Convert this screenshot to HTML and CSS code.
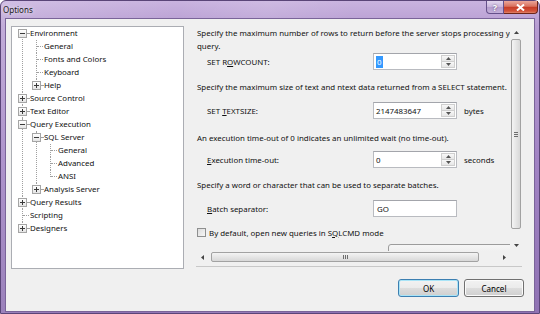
FILE: index.html
```html
<!DOCTYPE html>
<html lang="en">
<head>
    <meta charset="UTF-8">
    <title>Options</title>
    <link rel="stylesheet" href="styles.css">
</head>
<body>
    <div class="window">
        <div class="titlebar">
            <span class="title">Options</span>
            <div class="caption-buttons">
                <span class="cap-btn help">?</span>
                <span class="cap-btn close">
                    <svg width="9" height="7" viewBox="0 0 9 7"><path d="M1 0.5 L8 6.5 M8 0.5 L1 6.5" stroke="#fff" stroke-width="2"/></svg>
                </span>
            </div>
        </div>

        <div class="client">
            <div class="main">
                <div class="tree">
                    <ul class="tree-root">
                        <li>
                            <div class="node"><span class="toggle minus"></span><span class="dash"></span><span>Environment</span></div>
                            <ul>
                                <li><div class="node"><span class="leaf"></span><span>General</span></div></li>
                                <li><div class="node"><span class="leaf"></span><span>Fonts and Colors</span></div></li>
                                <li><div class="node"><span class="leaf"></span><span>Keyboard</span></div></li>
                                <li><div class="node"><span class="toggle plus"></span><span class="dash"></span><span>Help</span></div></li>
                            </ul>
                        </li>
                        <li><div class="node"><span class="toggle plus"></span><span class="dash"></span><span>Source Control</span></div></li>
                        <li><div class="node"><span class="toggle plus"></span><span class="dash"></span><span>Text Editor</span></div></li>
                        <li>
                            <div class="node"><span class="toggle minus"></span><span class="dash"></span><span>Query Execution</span></div>
                            <ul>
                                <li>
                                    <div class="node"><span class="toggle minus"></span><span class="dash"></span><span>SQL Server</span></div>
                                    <ul>
                                        <li><div class="node"><span class="leaf"></span><span>General</span></div></li>
                                        <li><div class="node"><span class="leaf"></span><span>Advanced</span></div></li>
                                        <li><div class="node"><span class="leaf"></span><span>ANSI</span></div></li>
                                    </ul>
                                </li>
                                <li><div class="node"><span class="toggle plus"></span><span class="dash"></span><span>Analysis Server</span></div></li>
                            </ul>
                        </li>
                        <li><div class="node"><span class="toggle plus"></span><span class="dash"></span><span>Query Results</span></div></li>
                        <li><div class="node"><span class="leaf"></span><span>Scripting</span></div></li>
                        <li><div class="node"><span class="toggle plus"></span><span class="dash"></span><span>Designers</span></div></li>
                    </ul>
                </div>

                <div class="page">
                    <div class="viewport">
                        <div class="content">
                            <p class="desc first">Specify the maximum number of rows to return before the server stops processing your<br>query.</p>
                            <div class="field">
                                <label>SET R<u>O</u>WCOUNT:</label>
                                <div class="textbox"><span class="sel">0</span>
                                    <div class="spin">
                                        <span class="spin-btn"><svg width="5" height="3" viewBox="0 0 5 3"><path d="M0 3 L2.5 0 L5 3Z" fill="#555"/></svg></span>
                                        <span class="spin-btn"><svg width="5" height="3" viewBox="0 0 5 3"><path d="M0 0 L2.5 3 L5 0Z" fill="#555"/></svg></span>
                                    </div>
                                </div>
                            </div>

                            <p class="desc">Specify the maximum size of text and ntext data returned from a SELECT statement.</p>
                            <div class="field">
                                <label>SET <u>T</u>EXTSIZE:</label>
                                <div class="textbox"><span>2147483647</span>
                                    <div class="spin">
                                        <span class="spin-btn"><svg width="5" height="3" viewBox="0 0 5 3"><path d="M0 3 L2.5 0 L5 3Z" fill="#555"/></svg></span>
                                        <span class="spin-btn"><svg width="5" height="3" viewBox="0 0 5 3"><path d="M0 0 L2.5 3 L5 0Z" fill="#555"/></svg></span>
                                    </div>
                                </div>
                                <span class="unit">bytes</span>
                            </div>

                            <p class="desc gap-large">An execution time-out of 0 indicates an unlimited wait (no time-out).</p>
                            <div class="field tight">
                                <label><u>E</u>xecution time-out:</label>
                                <div class="textbox"><span>0</span>
                                    <div class="spin">
                                        <span class="spin-btn"><svg width="5" height="3" viewBox="0 0 5 3"><path d="M0 3 L2.5 0 L5 3Z" fill="#555"/></svg></span>
                                        <span class="spin-btn"><svg width="5" height="3" viewBox="0 0 5 3"><path d="M0 0 L2.5 3 L5 0Z" fill="#555"/></svg></span>
                                    </div>
                                </div>
                                <span class="unit">seconds</span>
                            </div>

                            <p class="desc">Specify a word or character that can be used to separate batches.</p>
                            <div class="field">
                                <label><u>B</u>atch separator:</label>
                                <div class="textbox plain"><span>GO</span></div>
                            </div>

                            <div class="check-row">
                                <span class="checkbox"></span>
                                <span>By default, open new queries in S<u>Q</u>LCMD mode</span>
                            </div>

                            <div class="combo-peek"></div>
                        </div>

                        <div class="vscroll">
                            <span class="arrow"><svg width="5" height="3" viewBox="0 0 5 3"><path d="M0 3 L2.5 0 L5 3Z" fill="#444"/></svg></span>
                            <div class="thumb-v"><span class="grip-v"></span></div>
                            <span class="spacer"></span>
                            <span class="arrow"><svg width="5" height="3" viewBox="0 0 5 3"><path d="M0 0 L2.5 3 L5 0Z" fill="#444"/></svg></span>
                        </div>
                    </div>

                    <div class="hscroll-row">
                        <div class="hscroll">
                            <span class="arrow"><svg width="3" height="5" viewBox="0 0 3 5"><path d="M3 0 L0 2.5 L3 5Z" fill="#444"/></svg></span>
                            <div class="thumb-h"><span class="grip-h"></span></div>
                            <span class="spacer"></span>
                            <span class="arrow"><svg width="3" height="5" viewBox="0 0 3 5"><path d="M0 0 L3 2.5 L0 5Z" fill="#444"/></svg></span>
                        </div>
                        <div class="corner"></div>
                    </div>
                </div>
            </div>

            <div class="buttons">
                <button class="btn default">OK</button>
                <button class="btn">Cancel</button>
            </div>
        </div>
    </div>
</body>
</html>
```

FILE: styles.css
```css
body {
    margin: 0;
    font-family: "Noto Sans", "Open Sans", sans-serif;
    font-size: 7.9px;
    color: #111;
    background: #fff;
}
.window {
    width: 540px;
    height: 314px;
    box-sizing: border-box;
    display: flex;
    flex-direction: column;
    padding: 0 4px 1px 4px;
    border: 1px solid #5a4578;
    border-radius: 6px 6px 0 0;
    background: linear-gradient(100deg, rgba(255,255,255,0.16) 0%, rgba(255,255,255,0) 30%, rgba(255,255,255,0.1) 45%, rgba(255,255,255,0) 60%),
                linear-gradient(180deg, #c9b3df 0%, #b79dd2 8%, #a284c4 50%, #8f72b3 100%);
}
.titlebar {
    height: 17px;
    display: flex;
    justify-content: space-between;
    align-items: flex-start;
    margin: 0 -3px 0 -3px;
}
.title {
    padding: 3px 0 0 1px;
    line-height: 12px;
    font-size: 8px;
    color: #1a1a1a;
    text-shadow: 0 0 4px rgba(255,255,255,0.9);
}
.caption-buttons {
    display: flex;
}
.cap-btn {
    height: 13px;
    box-sizing: border-box;
    display: flex;
    align-items: center;
    justify-content: center;
}
.help {
    width: 18px;
    border: 1px solid #65508a;
    border-top: none;
    border-radius: 0 0 0 4px;
    background: linear-gradient(#e2d6ee, #c8b4dc 50%, #b39bcc 51%, #c4b0da);
    color: #fff;
    font-weight: bold;
    font-size: 9px;
    text-shadow: 0 0 2px #4a3a60;
}
.close {
    width: 34px;
    border: 1px solid #6d2519;
    border-top: none;
    border-left: none;
    border-radius: 0 0 4px 0;
    background: linear-gradient(#eba699, #d9705d 45%, #c63b26 50%, #d2533a 85%, #e2876c);
}
.client {
    flex: 1;
    display: flex;
    flex-direction: column;
    background: #f0f0f0;
    border: 1px solid #7a6499;
}
.main {
    display: flex;
    align-items: flex-start;
    gap: 12px;
    padding: 7px 12px 0 5px;
}

/* tree */
.tree {
    width: 173px;
    height: 243px;
    box-sizing: border-box;
    border: 1px solid #abadb3;
    background: #fff;
    flex: none;
}
.tree ul {
    list-style: none;
    margin: 0;
    padding: 0 0 0 14px;
}
.tree .tree-root {
    padding: 0 0 0 6px;
}
.tree li {
    position: relative;
}
.tree li::before {
    content: "";
    position: absolute;
    left: 4px;
    top: 0;
    bottom: 0;
    border-left: 1px dotted #a0a0a0;
}
.tree li:last-child::before {
    bottom: auto;
    height: 7px;
}
.tree .tree-root > li:first-child::before {
    top: 6px;
}
.node {
    height: 13px;
    line-height: 13px;
    display: flex;
    align-items: center;
    white-space: nowrap;
}
.toggle {
    position: relative;
    z-index: 1;
    flex: none;
    width: 9px;
    height: 9px;
    box-sizing: border-box;
    border: 1px solid #a5a5a5;
    background: linear-gradient(#fff, #e4e4e4);
}
.toggle::before {
    content: "";
    position: absolute;
    left: 1px;
    top: 3px;
    width: 5px;
    height: 1px;
    background: #3a3a3a;
}
.toggle.plus::after {
    content: "";
    position: absolute;
    left: 3px;
    top: 1px;
    width: 1px;
    height: 5px;
    background: #3a3a3a;
}
.dash {
    width: 2px;
    margin-right: 1px;
    border-top: 1px dotted #a0a0a0;
}
.leaf {
    width: 6px;
    margin: 0 1px 0 5px;
    border-top: 1px dotted #a0a0a0;
}

/* options page */
.page {
    flex: 1;
    min-width: 0;
    display: flex;
    flex-direction: column;
    padding-bottom: 3px;
    border-bottom: 1px solid #c8c8c8;
}
.viewport {
    height: 225px;
    display: flex;
}
.content {
    flex: 1;
    min-width: 0;
    overflow: hidden;
    padding: 1px 0 0 1px;
    white-space: nowrap;
}
.desc {
    margin: 11px 0 0 0;
    line-height: 13px;
}
.desc.first {
    margin-top: 0;
}
.desc.gap-large {
    margin-top: 13px;
}
.field {
    display: flex;
    align-items: center;
    height: 17px;
    margin-top: 8px;
    padding-left: 10px;
}
.desc.first + .field {
    margin-top: 0;
}
.field.tight {
    margin-top: 6px;
}
.field label {
    width: 166px;
}
.textbox {
    width: 84px;
    height: 17px;
    box-sizing: border-box;
    display: flex;
    align-items: center;
    padding-left: 2px;
    border: 1px solid #b9bbc0;
    border-top-color: #a3a5ab;
    background: #fff;
}
.textbox.plain {
    padding-left: 3px;
}
.sel {
    display: inline-block;
    height: 12px;
    line-height: 12px;
    padding: 0 1px;
    background: #3399ff;
    color: #fff;
}
.spin {
    width: 14px;
    height: 13px;
    margin-left: auto;
    margin-right: 1px;
    display: flex;
    flex-direction: column;
}
.spin-btn {
    flex: 1;
    display: flex;
    align-items: center;
    justify-content: center;
    border: 1px solid #cfcfcf;
    background: linear-gradient(#f8f8f8, #e6e6e6);
}
.spin-btn + .spin-btn {
    border-top: none;
}
.unit {
    margin-left: 7px;
}
.check-row {
    display: flex;
    align-items: center;
    height: 13px;
    margin-top: 9px;
}
.checkbox {
    width: 9px;
    height: 9px;
    box-sizing: border-box;
    margin-right: 3px;
    border: 1px solid #8e8f8f;
    background: linear-gradient(135deg, #dcdcdc, #f6f6f6);
}
.combo-peek {
    width: 130px;
    height: 20px;
    margin: 5px 0 0 191px;
    box-sizing: border-box;
    border: 1px solid #9c9c9c;
    border-radius: 3px;
    background: linear-gradient(#f6f6f6, #e4e4e4);
}

/* scrollbars */
.vscroll {
    width: 12px;
    display: flex;
    flex-direction: column;
    align-items: center;
}
.vscroll .arrow {
    height: 12px;
    display: flex;
    align-items: center;
}
.thumb-v {
    width: 10px;
    height: 190px;
    margin-top: 1px;
    box-sizing: border-box;
    display: flex;
    align-items: center;
    justify-content: center;
    border: 1px solid #a2a2a2;
    border-radius: 2px;
    background: linear-gradient(90deg, #f4f4f4, #e6e6e6 50%, #d8d8d8);
}
.grip-v {
    width: 4px;
    height: 5px;
    background: repeating-linear-gradient(#6d6d6d 0 1px, transparent 1px 2px);
}
.spacer {
    flex: 1;
}
.hscroll-row {
    display: flex;
    height: 12px;
}
.hscroll {
    flex: 1;
    display: flex;
    align-items: center;
}
.hscroll .arrow {
    width: 12px;
    display: flex;
    justify-content: center;
}
.thumb-h {
    width: 268px;
    height: 10px;
    margin-left: 3px;
    box-sizing: border-box;
    display: flex;
    align-items: center;
    justify-content: center;
    border: 1px solid #a2a2a2;
    border-radius: 2px;
    background: linear-gradient(#f4f4f4, #e6e6e6 50%, #d8d8d8);
}
.grip-h {
    width: 5px;
    height: 4px;
    background: repeating-linear-gradient(90deg, #6d6d6d 0 1px, transparent 1px 2px);
}
.corner {
    width: 12px;
}

/* dialog buttons */
.buttons {
    display: flex;
    justify-content: flex-end;
    gap: 5px;
    padding: 10px 10px 0 0;
}
.btn {
    height: 18px;
    padding: 0;
    font-family: inherit;
    font-size: 8px;
    color: #000;
    border: 1px solid #707070;
    border-radius: 3px;
    background: linear-gradient(#f2f2f2 0%, #ebebeb 50%, #dddddd 51%, #cfcfcf 100%);
    box-shadow: inset 0 0 0 1px #fbfbfb;
    width: 60px;
}
.btn.default {
    width: 61px;
    border-color: #3c7fb1;
    box-shadow: inset 0 0 0 1px #a9e4f7;
}
```
